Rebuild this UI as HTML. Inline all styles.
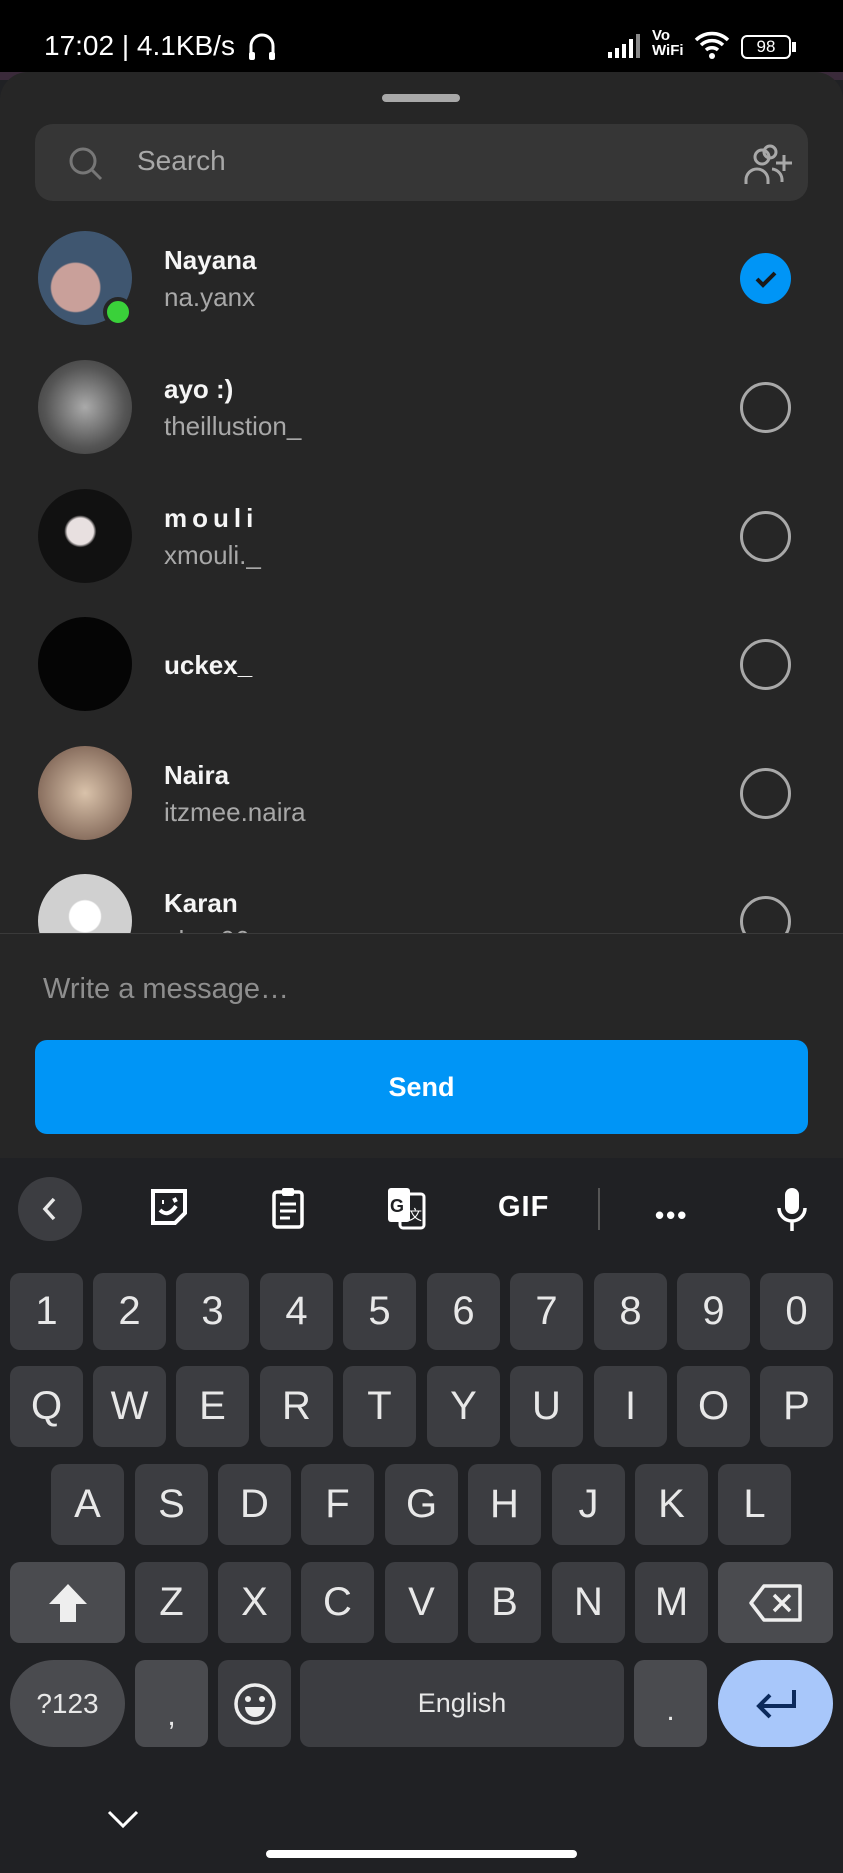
<!DOCTYPE html>
<html><head><meta charset="utf-8"><style>
*{margin:0;padding:0;box-sizing:border-box}
body{width:843px;height:1873px;background:#202124;position:relative;overflow:hidden;font-family:"Liberation Sans",Arial,sans-serif;color:#fff}
.a{position:absolute}
.k{position:absolute;background:#3c3d41;border-radius:10px;color:#e8e8e8;font-size:40px;display:flex;align-items:center;justify-content:center}
.k.d{background:#4a4b4f}
.av{position:absolute;left:38px;width:94px;height:94px;border-radius:50%}
.nm{position:absolute;left:164px;font-size:26px;font-weight:bold;color:#f5f5f5}
.un{position:absolute;left:164px;font-size:26px;color:#a8a8a8}
.cb{position:absolute;left:740px;width:51px;height:51px;border-radius:50%;border:3px solid #a8a8a8}
</style></head><body>
<div class="a" style="left:0;top:0;width:843px;height:80px;background:#3a2a3a"></div>
<div class="a" style="left:0;top:0;width:843px;height:72px;background:#000"></div>
<div class="a" style="left:44px;top:30px;font-size:28px;color:#fff">17:02 | 4.1KB/s</div>
<svg class="a" style="left:246px;top:30px" width="32" height="32" viewBox="0 0 32 32"><path d="M5 28V16a11 11 0 0 1 22 0v12" fill="none" stroke="#fff" stroke-width="3"/><rect x="3" y="22" width="6" height="8" rx="2" fill="#fff"/><rect x="23" y="22" width="6" height="8" rx="2" fill="#fff"/></svg>
<svg class="a" style="left:606px;top:32px" width="40" height="28"><rect x="2" y="20" width="4" height="6" fill="#fff"/><rect x="9" y="16" width="4" height="10" fill="#fff"/><rect x="16" y="12" width="4" height="14" fill="#fff"/><rect x="23" y="7" width="4" height="19" fill="#fff"/><rect x="30" y="2" width="4" height="24" fill="#888"/></svg>
<div class="a" style="left:652px;top:28px;font-size:15px;line-height:15px;font-weight:bold">Vo<br>WiFi</div>
<svg class="a" style="left:694px;top:30px" width="36" height="30" viewBox="0 0 36 30"><path d="M2 10a23 23 0 0 1 32 0M7 15a16 16 0 0 1 22 0M12 20a9 9 0 0 1 12 0" fill="none" stroke="#fff" stroke-width="3.5"/><circle cx="18" cy="26" r="3" fill="#fff"/></svg>
<div class="a" style="left:741px;top:35px;width:50px;height:24px;border:2.5px solid #fff;border-radius:6px;font-size:17px;text-align:center;line-height:19px">98</div>
<div class="a" style="left:792px;top:42px;width:4px;height:10px;background:#fff"></div>

<div class="a" style="left:0;top:72px;width:843px;height:1086px;background:#262626;border-radius:28px 28px 0 0"></div>
<div class="a" style="left:382px;top:94px;width:78px;height:8px;border-radius:4px;background:#a8a8a8"></div>
<div class="a" style="left:35px;top:124px;width:773px;height:77px;border-radius:18px;background:#363636"></div>
<svg class="a" style="left:68px;top:146px" width="36" height="36" viewBox="0 0 36 36"><circle cx="15" cy="15" r="12" fill="none" stroke="#777" stroke-width="3"/><path d="M24 24l9 9" stroke="#777" stroke-width="3"/></svg>
<div class="a" style="left:137px;top:145px;font-size:28px;color:#a8a8a8">Search</div>
<svg class="a" style="left:742px;top:143px" width="54" height="44" viewBox="0 0 54 44"><g fill="none" stroke="#a8a8a8" stroke-width="3"><circle cx="20" cy="14" r="7"/><path d="M4 41v-4a11 11 0 0 1 22 0v4"/><circle cx="28" cy="9" r="6"/><path d="M30 26a11 11 0 0 1 10 10v3M42 12v16M34 20h16"/></g></svg>

<div class="av" style="top:231px;background:radial-gradient(circle at 40% 60%,#c9a09a 0 30%,#3f5670 32%)"></div>
<div class="a" style="left:103px;top:297px;width:30px;height:30px;border-radius:50%;background:#3ad13a;border:4px solid #262626"></div>
<div class="nm" style="top:245px">Nayana</div><div class="un" style="top:282px">na.yanx</div>
<div class="a" style="left:740px;top:253px;width:51px;height:51px;border-radius:50%;background:#0095f6"></div>
<svg class="a" style="left:752px;top:265px" width="28" height="28"><path d="M5 14l6 6 12-12" fill="none" stroke="#1a1a1a" stroke-width="4"/></svg>

<div class="av" style="top:360px;background:radial-gradient(circle,#aaa,#555 60%,#333)"></div>
<div class="nm" style="top:374px">ayo :)</div><div class="un" style="top:411px">theillustion_</div>
<div class="cb" style="top:382px"></div>

<div class="av" style="top:489px;background:radial-gradient(circle at 45% 45%,#e8e0e0 0 18%,#111 22%)"></div>
<div class="nm" style="top:503px;letter-spacing:5px">mouli</div><div class="un" style="top:540px">xmouli._</div>
<div class="cb" style="top:511px"></div>

<div class="av" style="top:617px;background:#050505"></div>
<div class="nm" style="top:650px">uckex_</div>
<div class="cb" style="top:639px"></div>

<div class="av" style="top:746px;background:radial-gradient(circle,#d9c2aa,#8a7060 70%)"></div>
<div class="nm" style="top:760px">Naira</div><div class="un" style="top:797px">itzmee.naira</div>
<div class="cb" style="top:768px"></div>

<div class="a" style="left:0;top:870px;width:843px;height:63px;overflow:hidden">
<div class="av" style="top:4px;background:radial-gradient(circle at 50% 45%,#fff 0 22%,#d0d0d0 24%)"></div>
<div class="nm" style="top:18px">Karan</div><div class="un" style="top:55px">ahz..06</div>
<div class="cb" style="top:26px"></div>
</div>
<div class="a" style="left:0;top:933px;width:843px;height:1px;background:#3a3a3a"></div>
<div class="a" style="left:43px;top:973px;font-size:29px;color:#8e8e8e">Write a message…</div>
<div class="a" style="left:35px;top:1040px;width:773px;height:94px;border-radius:12px;background:#0095f6;font-size:27px;font-weight:bold;text-align:center;line-height:94px">Send</div>

<div class="a" style="left:18px;top:1177px;width:64px;height:64px;border-radius:50%;background:#3c3d41"></div>
<svg class="a" style="left:38px;top:1195px" width="24" height="28"><path d="M16 4L7 14l9 10" fill="none" stroke="#e8e8e8" stroke-width="3.5"/></svg>
<svg class="a" style="left:148px;top:1186px" width="42" height="42" viewBox="0 0 42 42"><path d="M5 5h32v22l-10 10H5z" fill="none" stroke="#fff" stroke-width="4"/><path d="M12 24q8 8 16-4M14 16h2M26 12l2 4" fill="none" stroke="#fff" stroke-width="4"/></svg>
<svg class="a" style="left:270px;top:1186px" width="36" height="44" viewBox="0 0 36 44"><rect x="4" y="6" width="28" height="35" rx="3" fill="none" stroke="#fff" stroke-width="3.5"/><rect x="12" y="2" width="12" height="8" rx="2" fill="#fff"/><path d="M10 18h16M10 25h16M10 32h10" stroke="#fff" stroke-width="3"/></svg>
<svg class="a" style="left:386px;top:1186px" width="40" height="44" viewBox="0 0 40 44"><rect x="2" y="2" width="22" height="34" rx="3" fill="#fff"/><rect x="14" y="8" width="24" height="34" rx="3" fill="none" stroke="#fff" stroke-width="3"/><text x="4" y="26" font-size="18" font-weight="bold" fill="#202124" font-family="Liberation Sans">G</text><text x="22" y="34" font-size="14" fill="#fff" font-family="Liberation Sans">文</text></svg>
<div class="a" style="left:498px;top:1191px;font-size:29px;font-weight:900;letter-spacing:1px">GIF</div>
<div class="a" style="left:598px;top:1188px;width:2px;height:42px;background:#555"></div>
<div class="a" style="left:655px;top:1200px;font-size:26px;letter-spacing:2px;font-weight:bold">•••</div>
<svg class="a" style="left:776px;top:1186px" width="32" height="46" viewBox="0 0 32 46"><rect x="9" y="2" width="14" height="26" rx="7" fill="#fff"/><path d="M3 22a13 13 0 0 0 26 0M16 35v10" fill="none" stroke="#fff" stroke-width="3.5"/></svg>

<div class="k" style="left:10px;top:1273px;width:73px;height:77px">1</div>
<div class="k" style="left:93px;top:1273px;width:73px;height:77px">2</div>
<div class="k" style="left:176px;top:1273px;width:73px;height:77px">3</div>
<div class="k" style="left:260px;top:1273px;width:73px;height:77px">4</div>
<div class="k" style="left:343px;top:1273px;width:73px;height:77px">5</div>
<div class="k" style="left:427px;top:1273px;width:73px;height:77px">6</div>
<div class="k" style="left:510px;top:1273px;width:73px;height:77px">7</div>
<div class="k" style="left:594px;top:1273px;width:73px;height:77px">8</div>
<div class="k" style="left:677px;top:1273px;width:73px;height:77px">9</div>
<div class="k" style="left:760px;top:1273px;width:73px;height:77px">0</div>

<div class="k" style="left:10px;top:1366px;width:73px;height:81px">Q</div>
<div class="k" style="left:93px;top:1366px;width:73px;height:81px">W</div>
<div class="k" style="left:176px;top:1366px;width:73px;height:81px">E</div>
<div class="k" style="left:260px;top:1366px;width:73px;height:81px">R</div>
<div class="k" style="left:343px;top:1366px;width:73px;height:81px">T</div>
<div class="k" style="left:427px;top:1366px;width:73px;height:81px">Y</div>
<div class="k" style="left:510px;top:1366px;width:73px;height:81px">U</div>
<div class="k" style="left:594px;top:1366px;width:73px;height:81px">I</div>
<div class="k" style="left:677px;top:1366px;width:73px;height:81px">O</div>
<div class="k" style="left:760px;top:1366px;width:73px;height:81px">P</div>

<div class="k" style="left:51px;top:1464px;width:73px;height:81px">A</div>
<div class="k" style="left:135px;top:1464px;width:73px;height:81px">S</div>
<div class="k" style="left:218px;top:1464px;width:73px;height:81px">D</div>
<div class="k" style="left:301px;top:1464px;width:73px;height:81px">F</div>
<div class="k" style="left:385px;top:1464px;width:73px;height:81px">G</div>
<div class="k" style="left:468px;top:1464px;width:73px;height:81px">H</div>
<div class="k" style="left:552px;top:1464px;width:73px;height:81px">J</div>
<div class="k" style="left:635px;top:1464px;width:73px;height:81px">K</div>
<div class="k" style="left:718px;top:1464px;width:73px;height:81px">L</div>

<div class="k d" style="left:10px;top:1562px;width:115px;height:81px"><svg width="46" height="46" viewBox="0 0 46 46"><path d="M23 4L4 24h11v18h16V24h11z" fill="#eee"/></svg></div>
<div class="k" style="left:135px;top:1562px;width:73px;height:81px">Z</div>
<div class="k" style="left:218px;top:1562px;width:73px;height:81px">X</div>
<div class="k" style="left:301px;top:1562px;width:73px;height:81px">C</div>
<div class="k" style="left:385px;top:1562px;width:73px;height:81px">V</div>
<div class="k" style="left:468px;top:1562px;width:73px;height:81px">B</div>
<div class="k" style="left:552px;top:1562px;width:73px;height:81px">N</div>
<div class="k" style="left:635px;top:1562px;width:73px;height:81px">M</div>
<div class="k d" style="left:718px;top:1562px;width:115px;height:81px"><svg width="56" height="40" viewBox="0 0 56 40"><path d="M16 3h36v34H16L3 20z" fill="none" stroke="#eee" stroke-width="3.5" stroke-linejoin="round"/><path d="M26 12l16 16M42 12L26 28" stroke="#eee" stroke-width="3.5"/></svg></div>

<div class="k d" style="left:10px;top:1660px;width:115px;height:87px;border-radius:44px;font-size:28px">?123</div>
<div class="k d" style="left:135px;top:1660px;width:73px;height:87px;font-size:30px;padding-top:24px">,</div>
<div class="k" style="left:218px;top:1660px;width:73px;height:87px"><svg width="46" height="46" viewBox="0 0 46 46"><circle cx="23" cy="23" r="19" fill="none" stroke="#eee" stroke-width="3.5"/><circle cx="16" cy="18" r="3" fill="#eee"/><circle cx="30" cy="18" r="3" fill="#eee"/><path d="M13 26h20a10 10 0 0 1-20 0z" fill="#eee"/></svg></div>
<div class="k" style="left:300px;top:1660px;width:324px;height:87px;font-size:27px">English</div>
<div class="k d" style="left:634px;top:1660px;width:73px;height:87px;font-size:30px;padding-top:14px">.</div>
<div class="k" style="left:718px;top:1660px;width:115px;height:87px;border-radius:44px;background:#a8c7fa"><svg width="48" height="36" viewBox="0 0 48 36"><path d="M42 4v16H8M18 9L7 20l11 11" fill="none" stroke="#0b2a5c" stroke-width="4"/></svg></div>

<svg class="a" style="left:106px;top:1808px" width="34" height="22"><path d="M3 4l14 14 14-14" fill="none" stroke="#fff" stroke-width="3"/></svg>
<div class="a" style="left:266px;top:1850px;width:311px;height:8px;border-radius:4px;background:#fff"></div>
</body></html>
